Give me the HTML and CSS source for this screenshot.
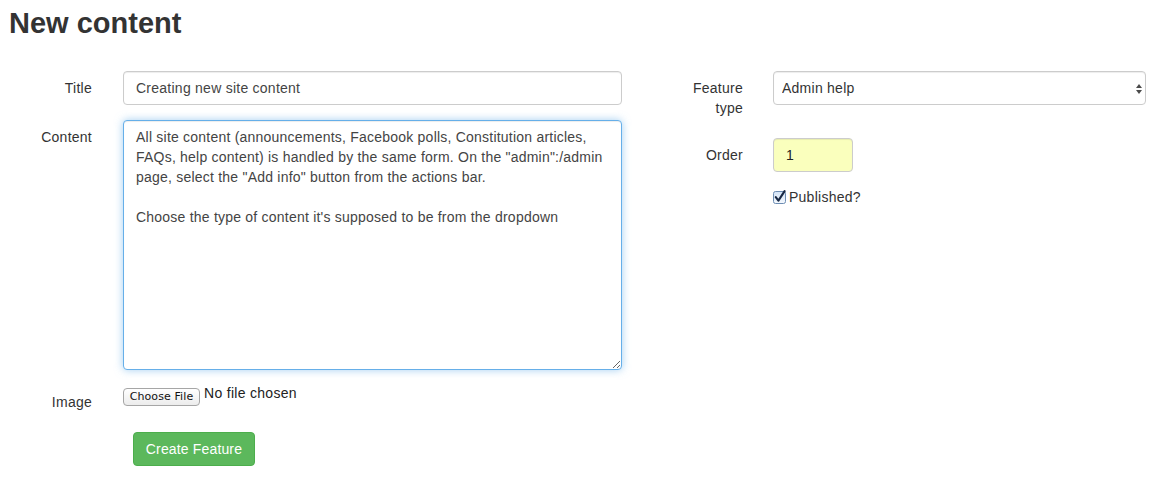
FILE: index.html
```html
<!DOCTYPE html>
<html lang="en">
<head>
<meta charset="utf-8">
<title>New content</title>
<link rel="stylesheet" href="styles.css">
</head>
<body>
<h1 class="page-title">New content</h1>
<form class="form">
  <div class="col col-left">
    <div class="group">
      <label class="lbl" for="title">Title</label>
      <div class="ctl"><input id="title" class="input" type="text" value="Creating new site content"></div>
    </div>
    <div class="group">
      <label class="lbl" for="content">Content</label>
      <div class="ctl"><textarea id="content" class="input area" wrap="off">All site content (announcements, Facebook polls, Constitution articles,
FAQs, help content) is handled by the same form. On the "admin":/admin
page, select the "Add info" button from the actions bar.

Choose the type of content it's supposed to be from the dropdown</textarea></div>
    </div>
    <div class="group">
      <label class="lbl">Image</label>
      <div class="ctl file">
        <button type="button" class="file-btn">Choose File</button>
        <span class="file-name">No file chosen</span>
      </div>
    </div>
    <div class="group actions">
      <button type="button" class="btn">Create Feature</button>
    </div>
  </div>
  <div class="col col-right">
    <div class="group">
      <label class="lbl" for="ftype">Feature type</label>
      <div class="ctl select-wrap">
        <select id="ftype" class="input select">
          <option>Admin help</option>
        </select>
        <svg class="select-arrows" width="6" height="10" viewBox="0 0 6 10" aria-hidden="true">
          <path d="M0 4 L3 0 L6 4 Z" fill="#4a4a4a"/>
          <path d="M0 6 L6 6 L3 10 Z" fill="#4a4a4a"/>
        </svg>
      </div>
    </div>
    <div class="group">
      <label class="lbl" for="order">Order</label>
      <div class="ctl"><input id="order" class="input order" type="text" value="1"></div>
    </div>
    <div class="group check-group">
      <label class="check">
        <svg class="check-box" width="14" height="14" viewBox="0 0 14 14" aria-hidden="true">
          <defs>
            <linearGradient id="cbg" x1="0" y1="0" x2="0" y2="1">
              <stop offset="0" stop-color="#d4e4f7"/>
              <stop offset="1" stop-color="#f4f8fd"/>
            </linearGradient>
          </defs>
          <rect x="0.5" y="1.5" width="12" height="12" rx="2" fill="url(#cbg)" stroke="#6d8db3"/>
          <path d="M2.8 7.2 L5.4 10.6 L11.6 1.2" stroke="#182945" stroke-width="2.1" fill="none" stroke-linecap="round" stroke-linejoin="round"/>
        </svg>
        <span>Published?</span>
      </label>
    </div>
  </div>
</form>
</body>
</html>
```

FILE: styles.css
```css
* {
  box-sizing: border-box;
}

body {
  margin: 0;
  font-family: "Liberation Sans", Arial, Helvetica, sans-serif;
  font-size: 14px;
  line-height: 20px;
  letter-spacing: 0.25px;
  color: #333;
  background: #fff;
}

.page-title {
  margin: 7px 0 32px 9px;
  font-size: 29px;
  line-height: 32px;
  font-weight: bold;
  letter-spacing: 0;
  color: #333;
}

.form {
  display: flex;
  align-items: flex-start;
  padding-left: 14px;
}

.col-left {
  width: 608px;
}

.col-right {
  width: 481px;
  margin-left: 43px;
}

.group {
  display: flex;
  align-items: flex-start;
  margin-bottom: 15px;
}

.lbl {
  width: 78px;
  flex: none;
  text-align: right;
  padding-top: 7px;
  margin-bottom: 5px;
  font-weight: normal;
  color: #333;
}

.col-left .ctl {
  margin-left: 31px;
  width: 499px;
}

.col-right .ctl {
  margin-left: 30px;
  width: 373px;
}

.input {
  display: block;
  width: 100%;
  height: 34px;
  margin: 0;
  padding: 6px 12px;
  font-family: inherit;
  font-size: 14px;
  line-height: 20px;
  letter-spacing: 0.25px;
  color: #444;
  background: #fff;
  border: 1px solid #ccc;
  border-radius: 4px;
  box-shadow: inset 0 1px 1px rgba(0, 0, 0, 0.075);
  outline: none;
}

.area {
  height: 250px;
  white-space: pre;
  overflow: hidden;
  resize: both;
  letter-spacing: 0.22px;
  border-color: #66afe9;
  box-shadow: inset 0 1px 1px rgba(0, 0, 0, 0.075), 0 0 8px rgba(102, 175, 233, 0.6);
}

.file {
  display: flex;
  align-items: flex-start;
}

.file-btn {
  margin-top: 3px;
  height: 18px;
  width: 77px;
  padding: 0;
  font-family: "DejaVu Sans", sans-serif;
  font-size: 11px;
  line-height: 16px;
  letter-spacing: 0.1px;
  color: #111;
  background: linear-gradient(#ffffff, #ececec);
  border: 1px solid #a6a6a6;
  border-radius: 4px;
}

.file-name {
  margin-left: 4px;
  line-height: 16px;
  color: #222;
  font-size: 14px;
  letter-spacing: 0.3px;
}

.actions {
  padding-left: 119px;
}

.btn {
  width: 122px;
  height: 34px;
  padding: 6px 6px;
  font-family: inherit;
  font-size: 14px;
  line-height: 20px;
  letter-spacing: 0.15px;
  color: #fff;
  background: #5cb85c;
  border: 1px solid #4cae4c;
  border-radius: 4px;
}

.select-wrap {
  position: relative;
}

.select {
  -webkit-appearance: none;
  appearance: none;
  padding-left: 8px;
  color: #333;
}

.select-arrows {
  position: absolute;
  right: 4px;
  top: 13px;
}

.order {
  width: 80px;
  background: #faffbd;
  color: #222;
}

.check-group {
  margin-top: 0;
  padding-left: 108px;
}

.check {
  display: flex;
  align-items: center;
  color: #333;
}

.check-box {
  margin-right: 2px;
  flex: none;
}
```
